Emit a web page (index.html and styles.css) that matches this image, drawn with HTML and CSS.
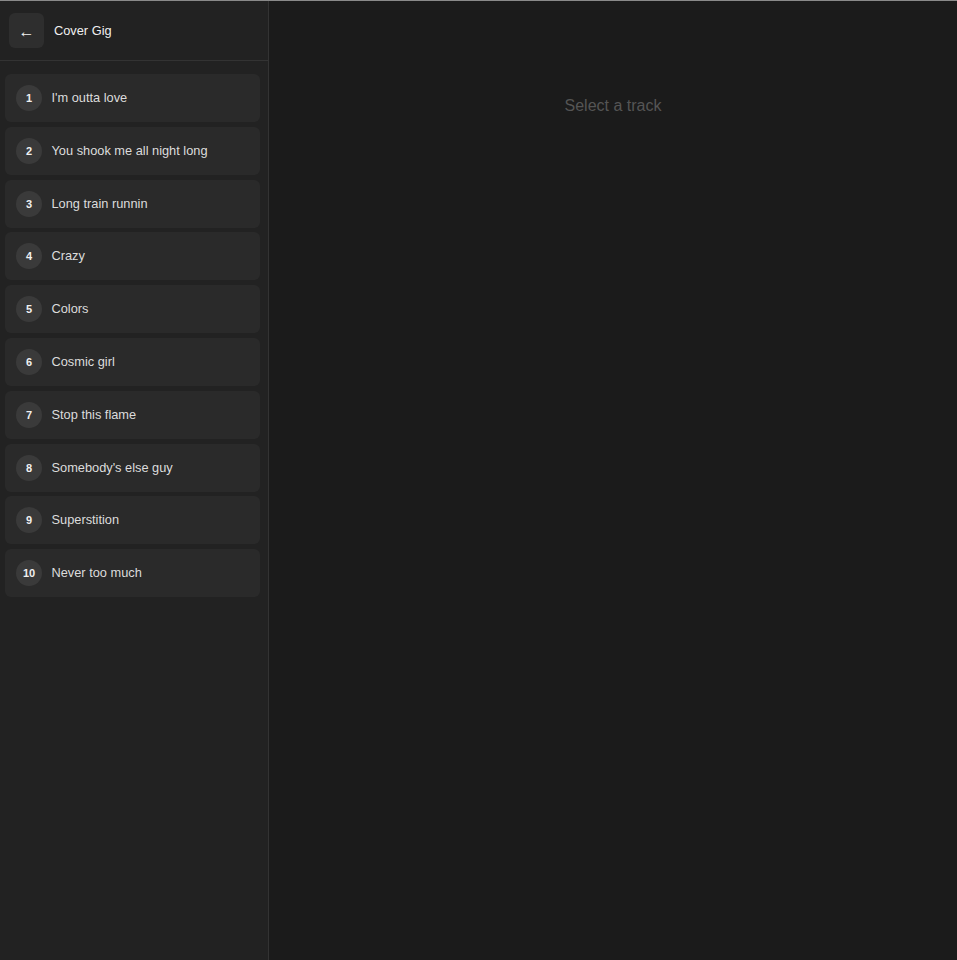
FILE: index.html
```html
<!DOCTYPE html>
<html>
<head>
<meta charset="utf-8">
<link rel="stylesheet" href="styles.css">
</head>
<body>
<div class="app">
  <aside class="sidebar">
    <header class="head">
      <button class="back">←</button>
      <span class="title">Cover Gig</span>
    </header>
    <ul class="tracks">
      <li class="track"><span class="num">1</span><span class="name">I'm outta love</span></li>
      <li class="track"><span class="num">2</span><span class="name">You shook me all night long</span></li>
      <li class="track"><span class="num">3</span><span class="name">Long train runnin</span></li>
      <li class="track"><span class="num">4</span><span class="name">Crazy</span></li>
      <li class="track"><span class="num">5</span><span class="name">Colors</span></li>
      <li class="track"><span class="num">6</span><span class="name">Cosmic girl</span></li>
      <li class="track"><span class="num">7</span><span class="name">Stop this flame</span></li>
      <li class="track"><span class="num">8</span><span class="name">Somebody's else guy</span></li>
      <li class="track"><span class="num">9</span><span class="name">Superstition</span></li>
      <li class="track"><span class="num">10</span><span class="name">Never too much</span></li>
    </ul>
  </aside>
  <main class="main">
    <p class="empty">Select a track</p>
  </main>
</div>
</body>
</html>
```
FILE: styles.css
```css
* { box-sizing: border-box; }
html, body { margin: 0; padding: 0; height: 100%; }
body {
  background: #1b1b1b;
  font-family: "Liberation Sans", Arial, sans-serif;
  color: #e6e6e6;
  border-top: 1px solid #8a8a8a;
}
.app { display: flex; height: 959px; }
.sidebar {
  width: 269px;
  flex: none;
  background: #222222;
  border-right: 1px solid #333333;
  display: flex;
  flex-direction: column;
}
.head {
  height: 60px;
  border-bottom: 1px solid #333333;
  display: flex;
  align-items: center;
  padding: 0 9px;
  gap: 10px;
}
.back {
  width: 35px;
  height: 35px;
  border: none;
  border-radius: 6px;
  background: #2e2e2e;
  color: #f2f2f2;
  font-size: 16px;
  font-family: "Liberation Sans", Arial, sans-serif;
  padding: 3px 0 0;
  display: flex;
  align-items: center;
  justify-content: center;
}
.title { font-size: 12.8px; color: #f0f0f0; }
.tracks {
  list-style: none;
  margin: 0;
  padding: 13px 8px 0 5px;
  display: flex;
  flex-direction: column;
  gap: 4.8px;
}
.track {
  height: 48px;
  background: #2a2a2a;
  border-radius: 6px;
  display: flex;
  align-items: center;
  padding: 0 11px;
  gap: 9.5px;
}
.num {
  width: 26px;
  height: 26px;
  border-radius: 50%;
  background: #3a3a3a;
  color: #f0f0f0;
  font-size: 11px;
  font-weight: bold;
  display: flex;
  align-items: center;
  justify-content: center;
  flex: none;
}
.name { font-size: 12.8px; color: #dcdcdc; margin-top: -1px; }
.main {
  flex: 1;
  display: flex;
  justify-content: center;
}
.empty {
  margin: 96px 0 0;
  font-size: 16px;
  color: #555555;
}
```
